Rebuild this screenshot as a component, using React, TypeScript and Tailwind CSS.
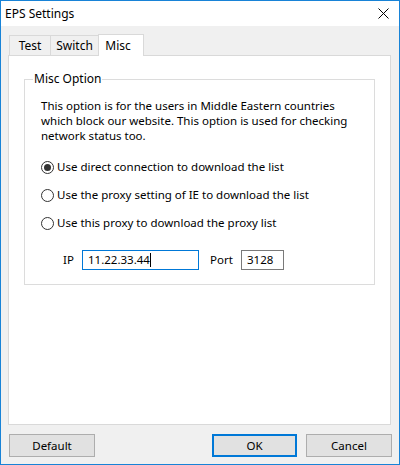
import React from 'react';

const font = { fontFamily: '"Segoe UI", "Noto Sans", sans-serif' };

function Radio({ checked, label }: { checked?: boolean; label: string }) {
  return (
    <label className="flex items-center h-[20px]">
      <span className="w-[13px] h-[13px] rounded-full border border-[#333333] bg-white flex items-center justify-center">
        {checked && <span className="w-[7px] h-[7px] rounded-full bg-[#333333]" />}
      </span>
      <span className="ml-[3px] text-[11.5px] text-black whitespace-nowrap">{label}</span>
    </label>
  );
}

function Button({ label, primary, width }: { label: string; primary?: boolean; width: string }) {
  return (
    <button
      className={`${width} h-[23px] bg-[#e1e1e1] text-[11.5px] text-black flex items-center justify-center ${
        primary ? 'border-2 border-[#0078d7]' : 'border border-[#adadad]'
      }`}
    >
      {label}
    </button>
  );
}

export default function App() {
  return (
    <div
      className="w-[400px] h-[465px] bg-[#f0f0f0] border border-[#1883d7] flex flex-col overflow-hidden"
      style={font}
    >
      {/* Title bar */}
      <div className="h-[25px] bg-white flex items-center justify-between pl-[4px] pr-[10px] shrink-0">
        <span className="text-[12px] text-black">EPS Settings</span>
        <svg width="11" height="11" viewBox="0 0 11 11">
          <path d="M0.5 0.5 L10.5 10.5 M10.5 0.5 L0.5 10.5" stroke="#000" strokeWidth="1" />
        </svg>
      </div>

      {/* Tabs */}
      <div className="pl-[7px] pr-[8px] pt-[7px] flex flex-col">
        <div className="flex items-end h-[22px] pl-[1px]">
          <div className="w-[42px] h-[20px] border border-b-0 border-[#d9d9d9] bg-[#f0f0f0] text-[12px] text-black flex items-center justify-center">
            Test
          </div>
          <div className="w-[48px] h-[20px] border border-l-0 border-b-0 border-[#d9d9d9] bg-[#f0f0f0] text-[12px] text-black flex items-center justify-center">
            Switch
          </div>
          <div className="relative z-10 w-[46px] h-[22px] -mb-[1px] -ml-[1px] border border-b-0 border-[#d9d9d9] bg-white text-[12px] text-black flex items-start justify-center pt-[2px] pr-[6px]">
            Misc
          </div>
        </div>

        {/* Panel */}
        <div className="h-[370px] bg-white border border-[#d9d9d9] pt-[14px] px-[15px]">
          <fieldset className="border border-[#dcdcdc] h-[215px] px-[16px] pt-[10px] m-0 min-w-0">
            <legend className="text-[12px] text-black px-[1px] ml-[-8px]">Misc Option</legend>
            <p className="text-[11.5px] leading-[15px] text-black whitespace-nowrap">
              This option is for the users in Middle Eastern countries
              <br />
              which block our website. This option is used for checking
              <br />
              network status too.
            </p>
            <div className="flex flex-col gap-[8px] mt-[14px]">
              <Radio checked label="Use direct connection to download the list" />
              <Radio label="Use the proxy setting of IE to download the list" />
              <Radio label="Use this proxy to download the proxy list" />
            </div>
            <div className="flex items-center mt-[17px] pl-[22px]">
              <span className="text-[11.5px] text-black w-[19px]">IP</span>
              <div className="w-[117px] h-[20px] border border-[#0078d7] flex items-center pl-[5px] text-[11.5px] text-black">
                11.22.33.44
                <span className="w-px h-[14px] bg-black" />
              </div>
              <span className="text-[11.5px] text-black ml-[11px] w-[31px]">Port</span>
              <div className="w-[43px] h-[20px] border border-[#7a7a7a] flex items-center pl-[5px] text-[11.5px] text-black">
                3128
              </div>
            </div>
          </fieldset>
        </div>
      </div>

      {/* Buttons */}
      <div className="flex items-center mt-[9px] pl-[8px] pr-[7px]">
        <Button label="Default" width="w-[86px]" />
        <div className="flex-1" />
        <Button label="OK" primary width="w-[85px]" />
        <div className="w-[9px]" />
        <Button label="Cancel" width="w-[86px]" />
      </div>
    </div>
  );
}
